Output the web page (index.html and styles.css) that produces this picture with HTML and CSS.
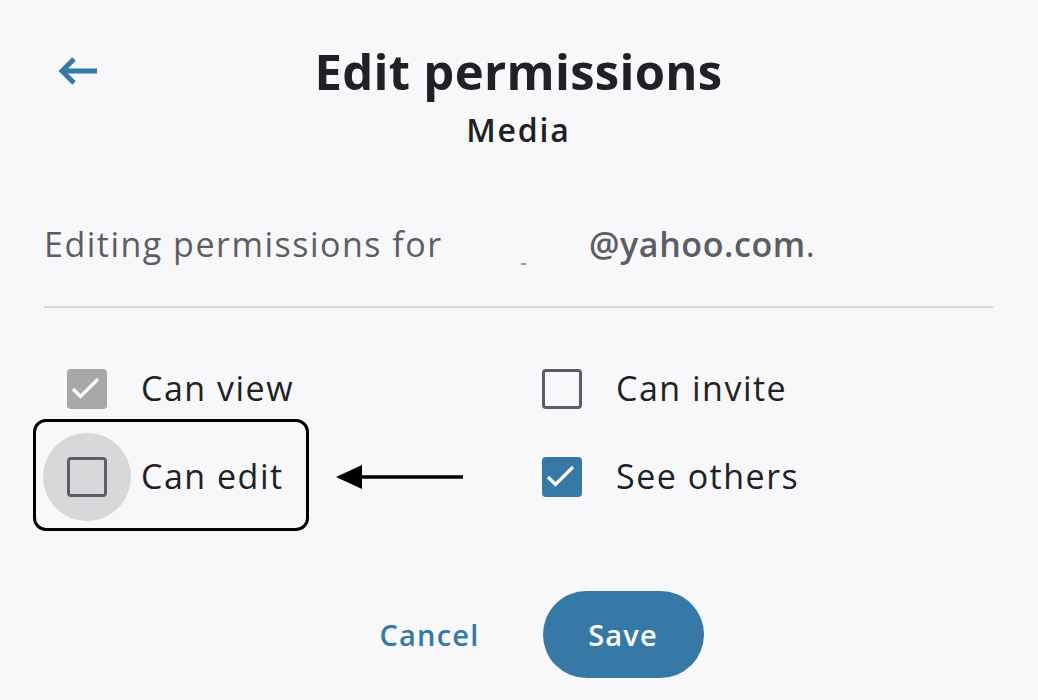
FILE: index.html
```html
<!DOCTYPE html>
<html lang="en">
<head>
    <meta charset="UTF-8">
    <meta name="viewport" content="width=device-width, initial-scale=1.0">
    <title>Edit permissions</title>
    <link rel="stylesheet" href="styles.css">
</head>
<body>
    <div class="container">
        <header class="header">
            <button class="back-btn" aria-label="Back">
                <svg width="42" height="30" viewBox="0 0 42 30">
                    <path d="M40 15H6M17 3L5 15l12 12" fill="none" stroke="currentColor" stroke-width="5"/>
                </svg>
            </button>
            <div class="titles">
                <h1>Edit permissions</h1>
                <h2>Media</h2>
            </div>
        </header>

        <p class="intro">Editing permissions for <span class="redacted"></span><strong>@yahoo.com</strong>.</p>

        <div class="perm-grid">
            <label class="perm">
                <span class="box-wrap">
                    <span class="box checked disabled">
                        <svg viewBox="0 0 40 40"><path d="M6 20l7.5 7.5L31 10"/></svg>
                    </span>
                </span>
                <span class="perm-label">Can view</span>
            </label>
            <label class="perm">
                <span class="box-wrap"><span class="box"></span></span>
                <span class="perm-label">Can invite</span>
            </label>
            <label class="perm highlight">
                <span class="box-wrap focused"><span class="box"></span></span>
                <span class="perm-label">Can edit</span>
                <svg class="pointer" width="128" height="26" viewBox="0 0 128 26">
                    <path d="M20 13H127" stroke="#000" stroke-width="3.5"/>
                    <path d="M0 13L26 1v24z" fill="#000"/>
                </svg>
            </label>
            <label class="perm">
                <span class="box-wrap">
                    <span class="box checked">
                        <svg viewBox="0 0 40 40"><path d="M6 20l7.5 7.5L31 10"/></svg>
                    </span>
                </span>
                <span class="perm-label">See others</span>
            </label>
        </div>

        <div class="actions">
            <button class="cancel">Cancel</button>
            <button class="save">Save</button>
        </div>
    </div>
</body>
</html>
```

FILE: styles.css
```css
:root {
    --primary: #3779a6;
    --text: #202124;
    --muted: #5b5e64;
    --background: #f8f8fa;
}

* {
    margin: 0;
    padding: 0;
    box-sizing: border-box;
}

body {
    font-family: 'Open Sans', 'Noto Sans', sans-serif;
    background: var(--background);
    color: var(--text);
    min-height: 100vh;
}

.container {
    padding: 42px 45px 0 44px;
}

.header {
    position: relative;
    text-align: center;
}

.back-btn {
    position: absolute;
    left: 13px;
    top: 14px;
    background: none;
    border: none;
    color: var(--primary);
    cursor: pointer;
}

.back-btn svg {
    display: block;
}

.titles h1 {
    font-size: 49px;
    font-weight: 700;
    line-height: 58px;
    letter-spacing: 0.3px;
}

.titles h2 {
    font-size: 32px;
    font-weight: 600;
    line-height: 44px;
    letter-spacing: 1.8px;
    margin-top: 8px;
}

.intro {
    margin-top: 70px;
    padding-bottom: 40px;
    border-bottom: 2px solid #d8d8db;
    font-size: 34px;
    line-height: 44px;
    letter-spacing: 1.5px;
    color: var(--muted);
}

.intro strong {
    font-weight: 600;
    letter-spacing: 0.6px;
}

.redacted {
    display: inline-block;
    position: relative;
    width: 136px;
    height: 10px;
}

.redacted::after {
    content: "";
    position: absolute;
    left: 68px;
    top: 16px;
    width: 5px;
    height: 2px;
    background: #9a9ca0;
}

.perm-grid {
    display: grid;
    grid-template-columns: 475px 1fr;
    margin: 37px 0 0 -1px;
}

.perm {
    display: flex;
    align-items: center;
    gap: 10px;
    height: 88px;
    position: relative;
    cursor: pointer;
}

.box-wrap {
    width: 88px;
    height: 88px;
    border-radius: 50%;
    display: flex;
    align-items: center;
    justify-content: center;
    flex-shrink: 0;
}

.box-wrap.focused {
    background: #d8d8da;
}

.box {
    width: 40px;
    height: 40px;
    border: 3px solid #5a5e66;
    border-radius: 4px;
    position: relative;
}

.box.checked {
    background: var(--primary);
    border: none;
}

.box.checked.disabled {
    background: #a8a8aa;
}

.box svg {
    display: block;
    width: 40px;
    height: 40px;
    fill: none;
    stroke: #fff;
    stroke-width: 3.2;
}

.perm-label {
    font-size: 34px;
    letter-spacing: 1.5px;
    line-height: 44px;
    margin-top: -2px;
}

.highlight::before {
    content: "";
    position: absolute;
    left: -10px;
    top: -14px;
    width: 270px;
    height: 106px;
    border: 3px solid #000;
    border-radius: 13px;
}

.pointer {
    margin-left: 42px;
    display: block;
}

.actions {
    display: flex;
    justify-content: center;
    align-items: center;
    gap: 63px;
    margin-top: 70px;
    padding-left: 46px;
}

.actions button {
    font-family: inherit;
    font-size: 29px;
    font-weight: 600;
    letter-spacing: 1.2px;
    border: none;
    cursor: pointer;
}

.cancel {
    background: none;
    color: var(--primary);
}

.save {
    background: var(--primary);
    color: #fff;
    width: 161px;
    height: 87px;
    border-radius: 44px;
}
```
